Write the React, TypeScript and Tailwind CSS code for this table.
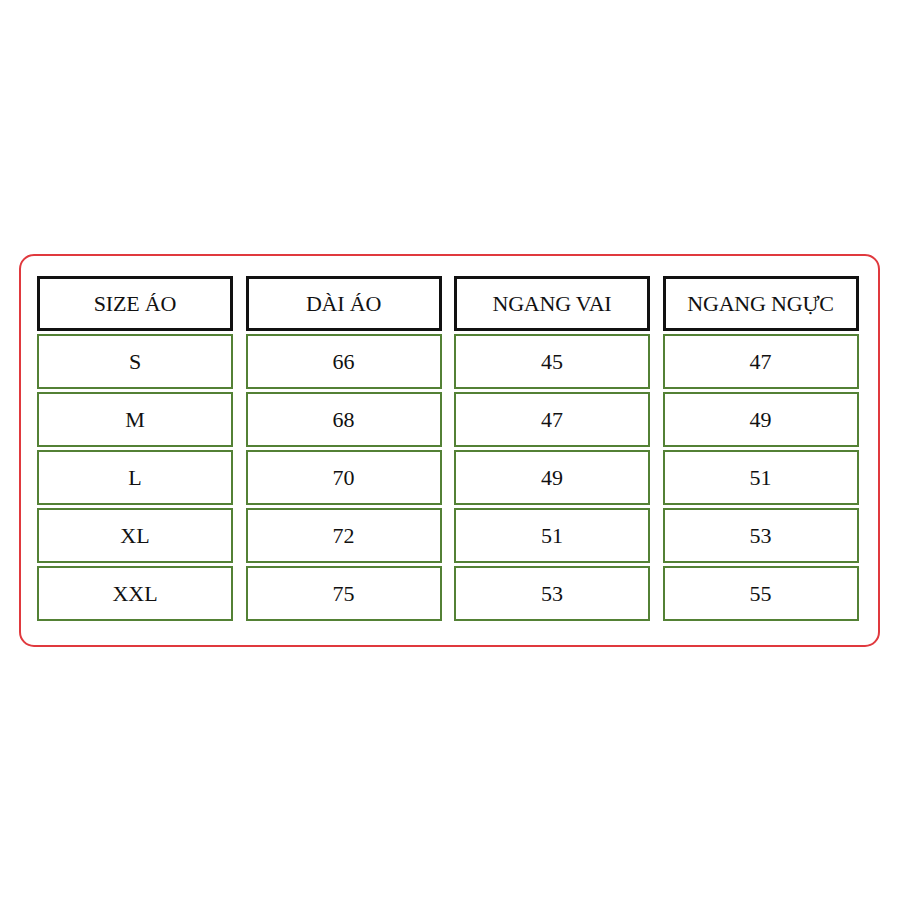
const HEADERS = ['SIZE ÁO', 'DÀI ÁO', 'NGANG VAI', 'NGANG NGỰC'];

const ROWS = [
  ['S', '66', '45', '47'],
  ['M', '68', '47', '49'],
  ['L', '70', '49', '51'],
  ['XL', '72', '51', '53'],
  ['XXL', '75', '53', '55'],
];

export default function App() {
  return (
    <div className="min-h-[900px] w-[900px] bg-white pt-[254px] font-['Liberation_Serif','Times_New_Roman',serif] text-[#111]">
      <div className="ml-[19px] w-[861px] rounded-[15px] border-2 border-[#e0393e] px-[16px] pb-[24px] pt-[20px]">
        <div className="grid grid-cols-[repeat(4,196px)] gap-x-[12.5px] gap-y-[3px]">
          {HEADERS.map((h) => (
            <div
              key={h}
              className="flex h-[55px] items-center justify-center border-[3px] border-[#111] text-[22px] tracking-[-0.2px]"
            >
              {h}
            </div>
          ))}
          {ROWS.map((row) =>
            row.map((v, i) => (
              <div
                key={row[0] + i}
                className="flex h-[55px] items-center justify-center border-[2.5px] border-[#538135] text-[22px]"
              >
                {v}
              </div>
            ))
          )}
        </div>
      </div>
    </div>
  );
}
